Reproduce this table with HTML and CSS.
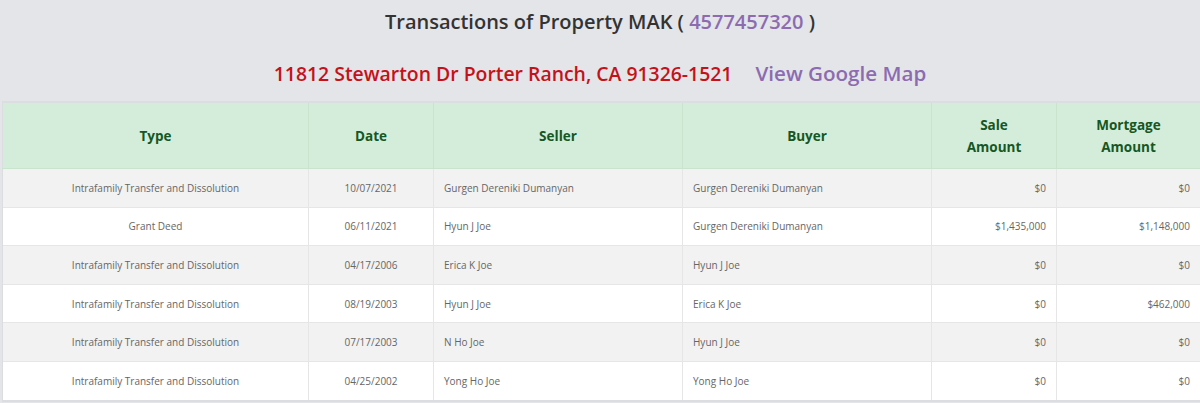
FILE: index.html
```html
<!DOCTYPE html>
<html>
  <head>
    <title>Transactions of Property</title>
    <link rel="stylesheet" href="styles.css">
  </head>
  <body>
    <!-- Property header -->
    <div class="page-header">
      <h2 class="title">Transactions of Property MAK ( <a href="#" class="apn">4577457320</a> )</h2>
      <div class="address">
        <span class="street">11812 Stewarton Dr Porter Ranch, CA 91326-1521</span>
        <a href="#" class="map-link">View Google Map</a>
      </div>
    </div>

    <!-- Transactions table -->
    <div class="table-wrap">
      <table class="tx-table">
        <thead>
          <tr>
            <th class="col-type">Type</th>
            <th class="col-date">Date</th>
            <th class="col-name">Seller</th>
            <th class="col-name">Buyer</th>
            <th class="col-amt">Sale<br>Amount</th>
            <th class="col-mort">Mortgage<br>Amount</th>
          </tr>
        </thead>
        <tbody>
          <tr>
            <td class="center">Intrafamily Transfer and Dissolution</td>
            <td class="center">10/07/2021</td>
            <td>Gurgen Dereniki Dumanyan</td>
            <td>Gurgen Dereniki Dumanyan</td>
            <td class="money">$0</td>
            <td class="money">$0</td>
          </tr>
          <tr>
            <td class="center">Grant Deed</td>
            <td class="center">06/11/2021</td>
            <td>Hyun J Joe</td>
            <td>Gurgen Dereniki Dumanyan</td>
            <td class="money">$1,435,000</td>
            <td class="money">$1,148,000</td>
          </tr>
          <tr>
            <td class="center">Intrafamily Transfer and Dissolution</td>
            <td class="center">04/17/2006</td>
            <td>Erica K Joe</td>
            <td>Hyun J Joe</td>
            <td class="money">$0</td>
            <td class="money">$0</td>
          </tr>
          <tr>
            <td class="center">Intrafamily Transfer and Dissolution</td>
            <td class="center">08/19/2003</td>
            <td>Hyun J Joe</td>
            <td>Erica K Joe</td>
            <td class="money">$0</td>
            <td class="money">$462,000</td>
          </tr>
          <tr>
            <td class="center">Intrafamily Transfer and Dissolution</td>
            <td class="center">07/17/2003</td>
            <td>N Ho Joe</td>
            <td>Hyun J Joe</td>
            <td class="money">$0</td>
            <td class="money">$0</td>
          </tr>
          <tr>
            <td class="center">Intrafamily Transfer and Dissolution</td>
            <td class="center">04/25/2002</td>
            <td>Yong Ho Joe</td>
            <td>Yong Ho Joe</td>
            <td class="money">$0</td>
            <td class="money">$0</td>
          </tr>
        </tbody>
      </table>
    </div>
  </body>
</html>
```

FILE: styles.css
```css
/* Page basics */
body {
  margin: 0;
  background-color: #e4e5e8;
  font-family: "Open Sans", "Noto Sans", sans-serif;
  color: #333;
}

.page-header {
  text-align: center;
  height: 101px;
}

.title {
  margin: 0;
  padding-top: 7px;
  font-size: 20px;
  font-weight: 600;
  line-height: 30px;
  color: #333;
}

.apn,
.map-link {
  color: #8c6bb1;
  text-decoration: none;
  font-weight: 600;
}

.address {
  margin-top: 21px;
  font-size: 19.4px;
  font-weight: 600;
  line-height: 30px;
}

.street {
  color: #c4121a;
}

.map-link {
  margin-left: 18px;
  font-size: 20.6px;
}

/* Table */
.table-wrap {
  padding-left: 2px;
}

.tx-table {
  width: 100%;
  border-collapse: collapse;
  background-color: #fff;
  border-top: 2px solid #dcdde0;
  border-bottom: 2px solid #dcdde0;
}

.tx-table th {
  background-color: #d4edda;
  color: #155724;
  font-size: 13.5px;
  font-weight: 700;
  line-height: 22px;
  height: 65px;
  padding: 0 10px;
  border: 1px solid #c9e3cf;
  border-top: none;
}

.tx-table td {
  font-size: 10px;
  color: #666;
  height: 37.6px;
  padding: 0 10px;
  border: 1px solid #e6e6e6;
  border-top: none;
  border-bottom: none;
}

.tx-table tbody tr:nth-child(odd) td {
  background-color: #f2f2f2;
}

.tx-table tbody tr + tr td {
  border-top: 1px solid #e6e6e6;
}

.tx-table th:first-child,
.tx-table td:first-child {
  border-left: 1px solid #dcdde0;
}

.tx-table th:last-child,
.tx-table td:last-child {
  border-right: none;
}

.col-type { width: 285px; }
.col-date { width: 104px; }
.col-name { width: 228px; }
.col-amt { width: 104px; }
.col-mort { width: 123px; }

.center {
  text-align: center;
}

.money {
  text-align: right;
}
```
